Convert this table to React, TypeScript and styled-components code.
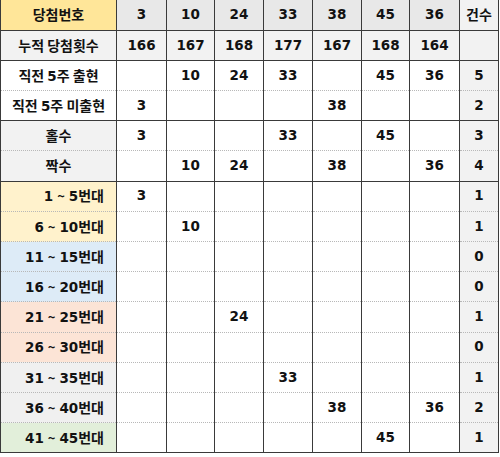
import React from "react";
import styled, { createGlobalStyle } from "styled-components";

const Global = createGlobalStyle`
  html, body { margin: 0; padding: 0; background: #fff; }
  body { font-family: "DejaVu Sans", "Noto Sans CJK KR", sans-serif; }
`;

const Table = styled.table`
  border-collapse: collapse;
  table-layout: fixed;
  width: 499px;
  border-left: 1px solid #3a3a3a;
  border-right: 1px solid #3a3a3a;
  border-bottom: 1px solid #3a3a3a;
  font-family: "DejaVu Sans", "Noto Sans CJK KR", sans-serif;
  font-size: 13.5px;
  font-weight: 700;
  color: #121212;
`;

type RowProps = { $solid?: boolean };

const Row = styled.tr<RowProps>`
  height: 30.2px;
  & > td {
    border-bottom: ${(p) => (p.$solid ? "1px solid #3a3a3a" : "1px dotted #b8b8b8")};
  }
`;

type CellProps = { $bg?: string; $align?: "left" | "center" | "right" };

const Cell = styled.td<CellProps>`
  padding: ${(p) => (p.$align === "right" ? "0 12px 0 4px" : "0 2px")};
  text-align: ${(p) => p.$align || "center"};
  background: ${(p) => p.$bg || "#fff"};
  border-left: 1px solid #3a3a3a;
  border-right: 1px solid #3a3a3a;
  white-space: nowrap;
  line-height: 1;
  vertical-align: middle;
`;

const Label = styled.span`
  font-family: "Noto Sans CJK KR", sans-serif;
  font-size: 14px;
`;

const Tilde = styled.span`
  font-family: "Noto Sans CJK KR", sans-serif;
  font-size: 13px;
  margin: 0 1px;
`;

const HEAD_Y = "#ffe699";
const HEAD_G = "#e8e8e8";
const LIGHT_G = "#f2f2f2";

const numbers = [3, 10, 24, 33, 38, 45, 36];

type DataRow = {
  label: React.ReactNode;
  key: string;
  bg: string;
  align: "center" | "right";
  values: (number | null)[];
  count: string;
  rowBg?: string;
  solid?: boolean;
};

const rng = (a: number, b: number) => (
  <>
    {a}
    <Tilde> ~ </Tilde>
    {b}
    <Label>번대</Label>
  </>
);

const rows: DataRow[] = [
  { key: "a", label: <Label>누적 당첨횟수</Label>, bg: LIGHT_G, align: "center", values: [166, 167, 168, 177, 167, 168, 164], count: "", rowBg: LIGHT_G, solid: true },
  { key: "b", label: <><Label>직전 </Label>5<Label>주 출현</Label></>, bg: "#fff", align: "center", values: [null, 10, 24, 33, null, 45, 36], count: "5" },
  { key: "c", label: <><Label>직전 </Label>5<Label>주 미출현</Label></>, bg: "#fff", align: "center", values: [3, null, null, null, 38, null, null], count: "2", solid: true },
  { key: "d", label: <Label>홀수</Label>, bg: LIGHT_G, align: "center", values: [3, null, null, 33, null, 45, null], count: "3" },
  { key: "e", label: <Label>짝수</Label>, bg: LIGHT_G, align: "center", values: [null, 10, 24, null, 38, null, 36], count: "4", solid: true },
  { key: "f", label: rng(1, 5), bg: "#fff2cc", align: "right", values: [3, null, null, null, null, null, null], count: "1" },
  { key: "g", label: rng(6, 10), bg: "#fff2cc", align: "right", values: [null, 10, null, null, null, null, null], count: "1" },
  { key: "h", label: rng(11, 15), bg: "#ddebf7", align: "right", values: [null, null, null, null, null, null, null], count: "0" },
  { key: "i", label: rng(16, 20), bg: "#ddebf7", align: "right", values: [null, null, null, null, null, null, null], count: "0" },
  { key: "j", label: rng(21, 25), bg: "#fce4d6", align: "right", values: [null, null, 24, null, null, null, null], count: "1" },
  { key: "k", label: rng(26, 30), bg: "#fce4d6", align: "right", values: [null, null, null, null, null, null, null], count: "0" },
  { key: "l", label: rng(31, 35), bg: "#f0f0f0", align: "right", values: [null, null, null, 33, null, null, null], count: "1" },
  { key: "m", label: rng(36, 40), bg: "#f0f0f0", align: "right", values: [null, null, null, null, 38, null, 36], count: "2" },
  { key: "n", label: rng(41, 45), bg: "#e2efda", align: "right", values: [null, null, null, null, null, 45, null], count: "1", solid: true },
];

const colWidths = [116, 50, 48, 49, 49, 49, 48, 50, 39];

export default function App() {
  return (
    <>
      <Global />
      <Table>
        <colgroup>
          {colWidths.map((w, i) => (
            <col key={i} style={{ width: w }} />
          ))}
        </colgroup>
        <tbody>
          <Row $solid>
            <Cell $bg={HEAD_Y}><Label>당첨번호</Label></Cell>
            {numbers.map((n) => (
              <Cell key={n} $bg={HEAD_G}>{n}</Cell>
            ))}
            <Cell $bg={LIGHT_G}><Label>건수</Label></Cell>
          </Row>
          {rows.map((r) => (
            <Row key={r.key} $solid={r.solid}>
              <Cell $bg={r.bg} $align={r.align}>{r.label}</Cell>
              {r.values.map((v, i) => (
                <Cell key={i} $bg={r.rowBg}>{v ?? ""}</Cell>
              ))}
              <Cell $bg={LIGHT_G}>{r.count}</Cell>
            </Row>
          ))}
        </tbody>
      </Table>
    </>
  );
}
